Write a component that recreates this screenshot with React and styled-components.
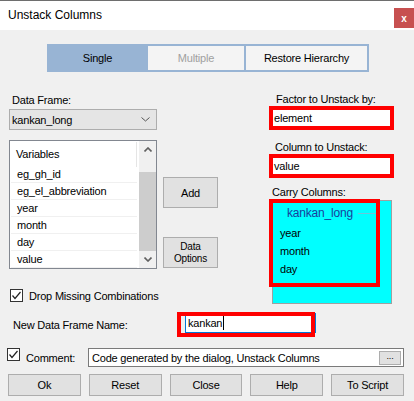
import React from "react";
import styled, { createGlobalStyle } from "styled-components";

const GlobalStyle = createGlobalStyle`
  body {
    margin: 0;
    background: #f0f0f0;
    font-family: "Liberation Sans", Arial, sans-serif;
    font-size: 11px;
    letter-spacing: -0.2px;
    color: #000;
  }
  * {
    box-sizing: border-box;
  }
`;

const Window = styled.div`
  width: 414px;
  height: 401px;
  overflow: hidden;
  background: #f0f0f0;
`;

const TitleBar = styled.div`
  height: 30px;
  background: #fff;
  border-top: 1px solid #6e6e6e;
  display: flex;
  align-items: flex-start;
  justify-content: space-between;
`;

const Title = styled.div`
  font-size: 12px;
  letter-spacing: 0;
  padding-left: 8px;
  line-height: 30px;
  margin-top: -1px;
`;

const CloseBtn = styled.div`
  width: 20px;
  height: 20px;
  margin-top: 7px;
  background: #c75050;
  color: #fff;
  font-weight: bold;
  font-size: 10px;
  display: flex;
  align-items: center;
  justify-content: center;
`;

const Tabs = styled.div`
  margin: 14px 0 0 47px;
  width: 322px;
  height: 28px;
  padding: 2px;
  display: grid;
  grid-template-columns: 97px 96px 121px;
  gap: 2px;
  background: #98b4d4;
`;

const Tab = styled.div`
  display: flex;
  align-items: center;
  justify-content: center;
  background: ${(p) => (p.$active ? "#98b4d4" : "#f4f4f4")};
  color: ${(p) => (p.$disabled ? "#a0a0a0" : "#000")};
`;

const Main = styled.div`
  margin-top: 20px;
  padding-left: 9px;
  display: flex;
  height: 212px;
`;

const LeftArea = styled.div`
  display: flex;
  flex-direction: column;
  width: 209px;
`;

const TopRow = styled.div`
  display: flex;
`;

const LeftCol = styled.div`
  width: 148px;
  display: flex;
  flex-direction: column;
`;

const Label = styled.div`
  height: ${(p) => p.$h || 14}px;
  line-height: ${(p) => p.$h || 14}px;
  padding-left: ${(p) => p.$indent || 0}px;
  margin-top: ${(p) => p.$mt || 0}px;
  white-space: nowrap;
`;

const Combo = styled.div`
  height: 21px;
  background: #e5e5e5;
  border: 1px solid #adadad;
  display: flex;
  align-items: center;
  justify-content: space-between;
  padding: 0 6px 0 2px;
`;

const ListBox = styled.div`
  margin-top: 10px;
  height: 129px;
  background: #fff;
  border: 1px solid #828790;
  display: flex;
`;

const ListItems = styled.div`
  flex: 1;
  display: flex;
  flex-direction: column;
`;

const ListHeader = styled.div`
  height: 25px;
  line-height: 25px;
  padding-left: 6px;
  margin-right: 2px;
  border-right: 1px solid #e5e5e5;
  margin-top: 1px;
  margin-bottom: -1px;
`;

const ListRow = styled.div`
  height: 17px;
  line-height: 16px;
  padding-left: 6px;
  margin: 0 2px 0 1px;
  border-bottom: 1px solid #f0f0f0;
`;

const ScrollBar = styled.div`
  width: 17px;
  background: #f0f0f0;
  display: flex;
  flex-direction: column;
`;

const ScrollArrow = styled.div`
  height: 17px;
  display: flex;
  align-items: center;
  justify-content: center;
`;

const ScrollTrack = styled.div`
  flex: 1;
  padding-top: 14px;
  display: flex;
`;

const Thumb = styled.div`
  flex: 1;
  background: #cdcdcd;
`;

const MidCol = styled.div`
  width: 55px;
  margin-left: 6px;
  display: flex;
  flex-direction: column;
`;

const Button = styled.div`
  background: #e1e1e1;
  border: 1px solid #adadad;
  display: flex;
  align-items: center;
  justify-content: center;
  text-align: center;
  height: ${(p) => p.$h || 22}px;
  margin-top: ${(p) => p.$mt || 0}px;
  font-size: ${(p) => p.$fs || 11}px;
  line-height: ${(p) => (p.$fs ? 12 : 14)}px;
`;

const RightCol = styled.div`
  width: 125px;
  margin-left: 51px;
  display: flex;
  flex-direction: column;
`;

const RedBox = styled.div`
  height: 24px;
  border: 4px solid #ff0000;
  background: #fff;
  line-height: 16px;
  padding-left: 1px;
`;

const CarryPanel = styled.div`
  position: relative;
  margin: 1px 0 0 3px;
  width: 120px;
  height: 104px;
  background: #00ffff;
  border: 1px solid #a0a0a0;
`;

const GroupHeader = styled.div`
  margin: 5px 0 0 14px;
  height: 14px;
  display: flex;
  align-items: center;
  gap: 5px;
  color: #1a3d9c;
  font-size: 12px;
`;

const GroupLine = styled.div`
  width: 19px;
  height: 1px;
  background: #6ec4d8;
`;

const CarryItem = styled.div`
  height: 18px;
  line-height: 18px;
  padding-left: 7px;
  margin-top: ${(p) => p.$mt || 0}px;
`;

const RedOverlay = styled.div`
  position: absolute;
  left: -4px;
  top: -2px;
  width: 111px;
  height: 88px;
  border: 4px solid #ff0000;
  pointer-events: none;
`;

const CheckRow = styled.div`
  margin-top: 20px;
  margin-left: 1px;
  display: flex;
  align-items: center;
  gap: 6px;
  height: 13px;
`;

const CheckBox = styled.div`
  width: 13px;
  height: 13px;
  border: 1px solid #333;
  background: #fff;
  display: flex;
  align-items: center;
  justify-content: center;
  flex-shrink: 0;
  align-self: ${(p) => (p.$top ? "flex-start" : "center")};
`;

const NameRow = styled.div`
  margin-top: 8px;
  height: 25px;
  display: flex;
  align-items: center;
`;

const NameLabel = styled.div`
  width: 177px;
  padding-left: 13px;
`;

const NameField = styled.div`
  position: relative;
  width: 138px;
  height: 25px;
  padding: 1px 0 0 8px;
`;

const FocusedInput = styled.div`
  width: 131px;
  height: 20px;
  border: 1px solid #0078d7;
  background: #fff;
  display: flex;
  align-items: center;
  padding-left: 2px;
`;

const Caret = styled.span`
  display: inline-block;
  width: 1px;
  height: 14px;
  background: #000;
  margin-left: 1px;
`;

const FieldOverlay = styled.div`
  position: absolute;
  inset: 0;
  border: 4px solid #ff0000;
  pointer-events: none;
`;

const CommentRow = styled.div`
  margin-top: 11px;
  padding-left: 7px;
  height: 19px;
  display: flex;
  align-items: center;
`;

const CommentLabel = styled.div`
  width: 68px;
  padding-left: 6px;
`;

const CommentBox = styled.div`
  width: 316px;
  height: 19px;
  border: 1px solid #7a7a7a;
  background: #fff;
  display: flex;
  align-items: center;
  justify-content: space-between;
  padding: 0 2px 0 3px;
`;

const DotsBtn = styled.div`
  width: 22px;
  height: 14px;
  background: #e1e1e1;
  border: 1px solid #adadad;
  font-size: 9px;
  line-height: 8px;
  text-align: center;
`;

const ButtonRow = styled.div`
  margin-top: 7px;
  padding-left: 8px;
  width: 404px;
  display: grid;
  grid-template-columns: repeat(5, 1fr);
  gap: 8px;
`;

const Chevron = ({ up, color = "#606060", w = 8, sw = 1.6 }) => (
  <svg width={w} height="5" viewBox={`0 0 ${w} 5`}>
    <polyline
      points={up ? `0.5,4.5 ${w / 2},1 ${w - 0.5},4.5` : `0.5,0.5 ${w / 2},4 ${w - 0.5},0.5`}
      fill="none"
      stroke={color}
      strokeWidth={sw}
    />
  </svg>
);

const Check = () => (
  <svg width="11" height="11" viewBox="0 0 11 11">
    <polyline points="1.5,5.5 4,8.5 9.5,2" fill="none" stroke="#222" strokeWidth="1.2" />
  </svg>
);

const variables = ["eg_gh_id", "eg_el_abbreviation", "year", "month", "day", "value"];
const carry = ["year", "month", "day"];
const buttons = ["Ok", "Reset", "Close", "Help", "To Script"];

export default function App() {
  return (
    <Window>
      <GlobalStyle />
      <TitleBar>
        <Title>Unstack Columns</Title>
        <CloseBtn>x</CloseBtn>
      </TitleBar>

      <Tabs>
        <Tab $active>Single</Tab>
        <Tab $disabled>Multiple</Tab>
        <Tab>Restore Hierarchy</Tab>
      </Tabs>

      <Main>
        <LeftArea>
          <TopRow>
            <LeftCol>
              <Label $h={17} $indent={3}>Data Frame:</Label>
              <Combo>
                <span>kankan_long</span>
                <Chevron w={9} sw={1} color="#555" />
              </Combo>
              <ListBox>
                <ListItems>
                  <ListHeader>Variables</ListHeader>
                  {variables.map((v) => (
                    <ListRow key={v}>{v}</ListRow>
                  ))}
                </ListItems>
                <ScrollBar>
                  <ScrollArrow>
                    <Chevron up />
                  </ScrollArrow>
                  <ScrollTrack>
                    <Thumb />
                  </ScrollTrack>
                  <ScrollArrow>
                    <Chevron />
                  </ScrollArrow>
                </ScrollBar>
              </ListBox>
            </LeftCol>
            <MidCol>
              <Button $h={31} $mt={85}>Add</Button>
              <Button $h={31} $mt={29} $fs={10}>
                Data
                <br />
                Options
              </Button>
            </MidCol>
          </TopRow>
          <CheckRow>
            <CheckBox>
              <Check />
            </CheckBox>
            Drop Missing Combinations
          </CheckRow>
        </LeftArea>

        <RightCol>
          <Label $indent={7}>Factor to Unstack by:</Label>
          <RedBox>element</RedBox>
          <Label $indent={6} $mt={10}>Column to Unstack:</Label>
          <RedBox>value</RedBox>
          <Label $indent={3} $mt={7}>Carry Columns:</Label>
          <CarryPanel>
            <GroupHeader>
              kankan_long
              <GroupLine />
            </GroupHeader>
            {carry.map((c, i) => (
              <CarryItem key={c} $mt={i === 0 ? 4 : 0}>
                {c}
              </CarryItem>
            ))}
            <RedOverlay />
          </CarryPanel>
        </RightCol>
      </Main>

      <NameRow>
        <NameLabel>New Data Frame Name:</NameLabel>
        <NameField>
          <FocusedInput>
            kankan
            <Caret />
          </FocusedInput>
          <FieldOverlay />
        </NameField>
      </NameRow>

      <CommentRow>
        <CheckBox $top>
          <Check />
        </CheckBox>
        <CommentLabel>Comment:</CommentLabel>
        <CommentBox>
          <span>Code generated by the dialog, Unstack Columns</span>
          <DotsBtn>...</DotsBtn>
        </CommentBox>
      </CommentRow>

      <ButtonRow>
        {buttons.map((b) => (
          <Button key={b}>{b}</Button>
        ))}
      </ButtonRow>
    </Window>
  );
}
